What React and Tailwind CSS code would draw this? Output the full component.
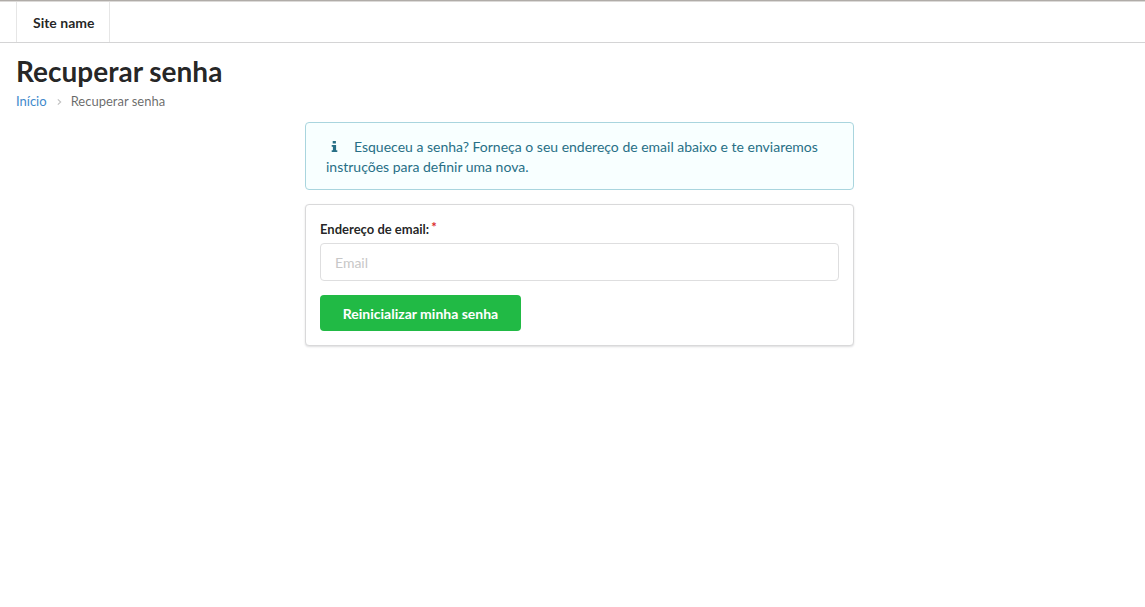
export default function App() {
  return (
    <div className="min-h-screen bg-white font-['Lato',sans-serif] text-sm leading-5 text-black/87">
      <header className="border-t border-b border-t-[#b0aca8] border-b-[#d4d4d5]">
        <nav className="flex border-t border-[#dcdad8] px-4">
          <a href="#" className="border-x border-[#e6e6e6] pt-[13px] pr-[15px] pb-[11px] pl-4 leading-4 font-bold">
            Site name
          </a>
        </nav>
      </header>
      <main>
        <div className="px-4 pt-[10px]">
          <h1 className="text-[28px] leading-9 font-bold">Recuperar senha</h1>
          <nav aria-label="Breadcrumb" className="mt-[3px] flex items-center text-[13px] leading-[18px]">
            <a href="#" className="text-[#4189cc]">Início</a>
            <svg viewBox="0 0 6 8" className="mt-[2px] mr-[9px] ml-[10px] h-2 w-[5px]" fill="none" stroke="#c2c2c2" strokeWidth="1.4" aria-hidden="true">
              <path d="M1 0.8 4.4 4 1 7.2" />
            </svg>
            <span className="text-black/60">Recuperar senha</span>
          </nav>
        </div>
        <div className="mt-3 flex justify-center pl-[14px]">
          <div className="flex w-full max-w-[549px] flex-col gap-[14px]">
            <div className="rounded border border-[#a9d5de] bg-[#f8ffff] px-5 pt-[14px] pb-3 text-[#276f86]">
              <svg viewBox="0 0 6 11" className="mr-4 ml-[5px] inline h-[11px] w-[7px] align-baseline" fill="currentColor" aria-hidden="true">
                <path d="M1.2 0h3.2v2.6H1.2zM0.2 4h4.4v5.2H5.8V11H0.2V9.2H1.4V5.8H0.2z" />
              </svg>
              Esqueceu a senha? Forneça o seu endereço de email abaixo e te enviaremos instruções para definir uma nova.
            </div>
            <form className="rounded border border-[#d9d9da] bg-white p-[14px] shadow-[0_1px_2px_rgba(34,36,38,0.15)]">
              <label htmlFor="email" className="mb-1 block text-[13px] font-bold">
                Endereço de email:<span className="-mt-[2px] ml-[2px] inline-block align-top text-[#db2828]">*</span>
              </label>
              <input id="email" type="email" placeholder="Email" className="block h-[38px] w-full rounded border border-[#dededf] px-[14px] placeholder:text-[#c7c7c7]" />
              <button type="button" className="mt-[14px] block h-9 min-w-[201px] rounded bg-[#21ba45] px-[21px] pt-[2px] font-bold text-white">
                Reinicializar minha senha
              </button>
            </form>
          </div>
        </div>
      </main>
    </div>
  );
}
